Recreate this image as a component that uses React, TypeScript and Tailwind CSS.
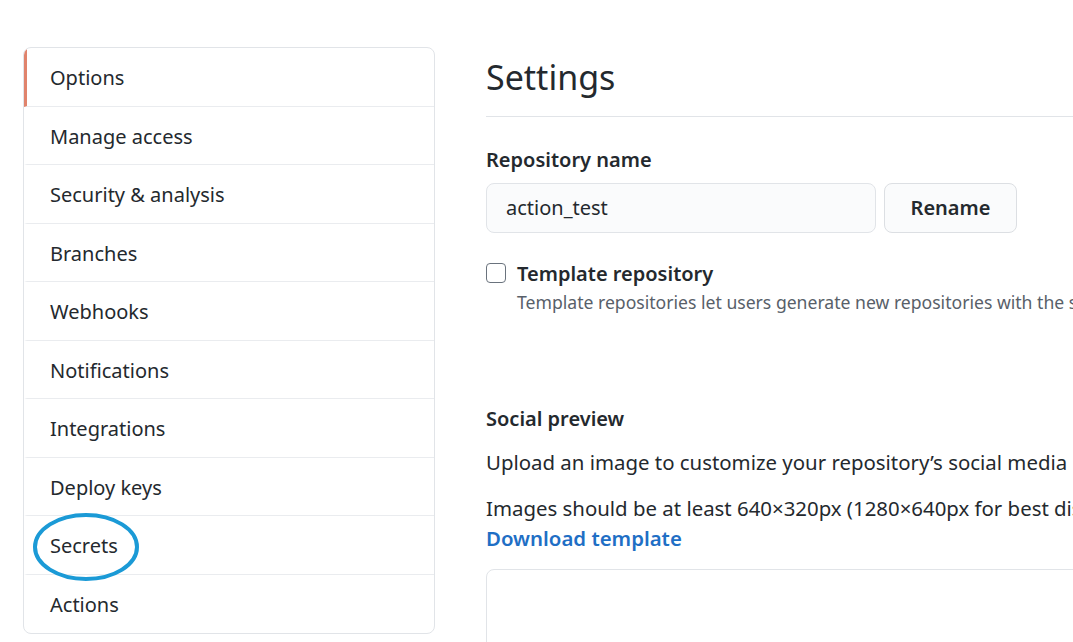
import React from 'react';

const navItems = [
  'Options',
  'Manage access',
  'Security & analysis',
  'Branches',
  'Webhooks',
  'Notifications',
  'Integrations',
  'Deploy keys',
  'Secrets',
  'Actions',
];

const SecretsCircle = () => (
  <svg
    className="pointer-events-none absolute left-[5px] top-[-4px]"
    width="110"
    height="70"
    viewBox="0 0 110 70"
  >
    <ellipse
      cx="54"
      cy="35"
      rx="51"
      ry="32"
      fill="none"
      stroke="#1b9ad6"
      strokeWidth="4"
    />
  </svg>
);

const App = () => {
  return (
    <div className="flex h-[642px] w-[1073px] overflow-hidden bg-white pl-[23px] pt-[47px] font-['Noto_Sans',sans-serif] text-[#24292e]">
      <nav className="w-[412px] shrink-0 self-start overflow-hidden rounded-lg border border-[#e1e4e8]">
        {navItems.map((item, i) => (
          <div
            key={item}
            className={
              'relative flex h-[58.5px] items-center border-l-[3px] pl-[23px] pt-[3px] text-[20px] ' +
              (i === 0 ? 'border-l-[#e0836c] ' : 'border-l-transparent ') +
              (i < navItems.length - 1 ? 'border-b border-b-[#eaecef]' : '')
            }
          >
            {item === 'Secrets' && <SecretsCircle />}
            <span className="relative">{item}</span>
          </div>
        ))}
      </nav>

      <main className="ml-[51px] min-w-0 flex-1 overflow-hidden">
        <div className="mt-[9px] border-b border-[#e1e4e8] pb-[18px]">
          <h1 className="text-[34px] leading-[42px] font-normal">Settings</h1>
        </div>

        <h2 className="mt-[29px] text-[20px] leading-[28px] font-semibold">
          Repository name
        </h2>
        <div className="mt-[9px] flex gap-[8px]">
          <div className="flex h-[50px] w-[390px] items-center rounded-lg border border-[#e1e4e8] bg-[#fafbfc] px-[19px] text-[20px]">
            action_test
          </div>
          <button className="h-[50px] w-[133px] rounded-lg border border-[#dcdfe3] bg-[#fafbfc] text-[20px] font-semibold">
            Rename
          </button>
        </div>

        <div className="mt-[31px] flex gap-[11px]">
          <div className="mt-[-1px] h-[20px] w-[20px] shrink-0 rounded-[4px] border border-[#6a737d]" />
          <div className="whitespace-nowrap">
            <div className="text-[20px] leading-[20px] font-semibold">
              Template repository
            </div>
            <p className="mt-[6px] text-[17.6px] leading-[24px] text-[#586069]">
              Template repositories let users generate new repositories with the same directory structure and files.
            </p>
          </div>
        </div>

        <h2 className="mt-[91px] text-[20px] leading-[28px] font-semibold">
          Social preview
        </h2>
        <p className="mt-[14px] whitespace-nowrap text-[20.4px] leading-[30px]">
          Upload an image to customize your repository’s social media preview.
        </p>
        <p className="mt-[16px] whitespace-nowrap text-[20.4px] leading-[30px]">
          Images should be at least 640×320px (1280×640px for best display).
        </p>
        <a className="block text-[20.4px] leading-[30px] font-semibold text-[#1f6fc5]">
          Download template
        </a>
        <div className="mt-[16px] h-[120px] w-[700px] rounded-lg border border-[#e1e4e8]" />
      </main>
    </div>
  );
};

export default App;
